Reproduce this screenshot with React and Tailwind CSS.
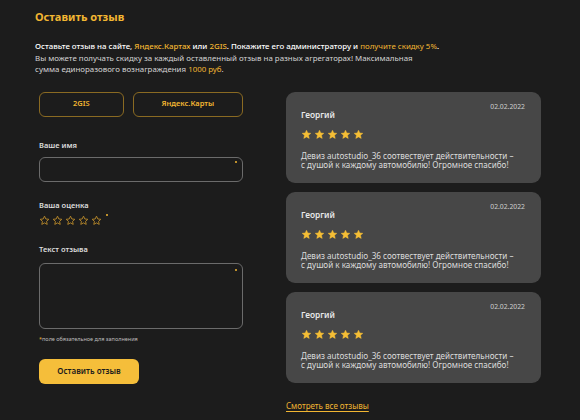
const reviews = [
  { name: "Георгий", date: "02.02.2022" },
  { name: "Георгий", date: "02.02.2022" },
  { name: "Георгий", date: "02.02.2022" },
]

function Star({ filled }) {
  return (
    <svg width="11" height="11" viewBox="0 0 24 24">
      <path
        d="M12 2.5l2.9 6.2 6.6.7-5 4.5 1.4 6.6L12 17.2l-5.9 3.3 1.4-6.6-5-4.5 6.6-.7z"
        fill={filled ? "#f5be35" : "none"}
        stroke={filled ? "#f5be35" : "#b8892a"}
        strokeWidth={filled ? 1 : 2}
        strokeLinejoin="round"
      />
    </svg>
  )
}

function ReviewCard({ name, date }) {
  return (
    <div className="bg-[#474747] rounded-[9px] h-[91px] pl-[15px] pr-[16px] pt-[10px]">
      <div className="flex justify-between">
        <div className="text-[8.3px] font-semibold text-[#e8e8e8] mt-[7px]">{name}</div>
        <div className="text-[6.8px] text-[#cfcfcf]">{date}</div>
      </div>
      <div className="flex gap-[2px] mt-[8px]">
        {[0, 1, 2, 3, 4].map((i) => (
          <Star key={i} filled />
        ))}
      </div>
      <p className="text-[8.1px] leading-[9.5px] text-[#dcdcdc] mt-[11px] whitespace-nowrap">
        Девиз autostudio_36 соотвествует действительности –<br />
        с душой к каждому автомобилю! Огромное спасибо!
      </p>
    </div>
  )
}

export default function App() {
  return (
    <div className="w-[580px] h-[420px] bg-[#1c1c1c] overflow-hidden pl-[35px] font-['Noto_Sans',sans-serif]">
      <h1 className="pt-[9px] text-[11px] font-bold text-[#f2b632] leading-[16px]">Оставить отзыв</h1>
      <div className="mt-[16px] text-[7.9px] leading-[11.5px] text-[#d4d4d4]">
        <p className="font-medium text-white">
          Оставьте отзыв на сайте, <span className="text-[#f2b632]">Яндекс.Картах</span> или <span className="text-[#f2b632]">2GIS</span>. Покажите его администратору и{" "}
          <span className="text-[#f2b632] font-normal">получите скидку 5%</span>.
        </p>
        <p className="w-[380px]">
          Вы можете получать скидку за каждый оставленный отзыв на разных агрегаторах! Максимальная сумма единоразового вознаграждения{" "}
          <span className="text-[#f2b632]">1000 руб</span>.
        </p>
      </div>

      <div className="flex gap-[43px] mt-[16px] ml-[4px]">
        <div className="w-[204px] shrink-0">
          <div className="flex gap-[9px]">
            <button className="w-[85px] h-[25px] rounded-[6px] border border-[#8a6a22] text-[7.5px] font-semibold text-[#f2b632]">2GIS</button>
            <button className="w-[111px] h-[25px] rounded-[6px] border border-[#8a6a22] text-[7.5px] font-semibold text-[#f2b632]">Яндекс.Карты</button>
          </div>

          <div className="mt-[23px] text-[7.5px] font-semibold text-[#dcdcdc]">Ваше имя</div>
          <div className="relative mt-[6px] h-[25px] rounded-[6px] border border-[#6b6b6b]">
            <span className="absolute right-[5px] top-[3px] w-[2px] h-[2px] rounded-full bg-[#f2b632]"></span>
          </div>

          <div className="mt-[18px] text-[7.5px] font-semibold text-[#dcdcdc]">Ваша оценка</div>
          <div className="relative flex gap-[2px] mt-[4px] w-fit">
            {[0, 1, 2, 3, 4].map((i) => (
              <Star key={i} />
            ))}
            <span className="absolute -right-[6px] -top-[1px] w-[2px] h-[2px] rounded-full bg-[#f2b632]"></span>
          </div>

          <div className="mt-[18px] text-[7.5px] font-semibold text-[#dcdcdc]">Текст отзыва</div>
          <div className="relative mt-[8px] h-[66px] rounded-[6px] border border-[#6b6b6b]">
            <span className="absolute right-[5px] top-[5px] w-[2px] h-[2px] rounded-full bg-[#f2b632]"></span>
          </div>

          <div className="mt-[6px] text-[5.5px] text-[#bdbdbd]">
            <span className="text-[#f2b632]">*</span>поле обязательное для заполнения
          </div>

          <button className="mt-[15px] w-[100px] h-[25px] rounded-[6px] bg-[#f5be3a] text-[8px] font-semibold text-[#1c1c1c]">
            Оставить отзыв
          </button>
        </div>

        <div className="w-[255px] flex flex-col">
          <div className="flex flex-col gap-[9px]">
            {reviews.map((r, i) => (
              <ReviewCard key={i} {...r} />
            ))}
          </div>
          <a className="mt-[17px] text-[8px] text-[#f2b632] underline underline-offset-2 w-fit">Смотреть все отзывы</a>
        </div>
      </div>
    </div>
  )
}
